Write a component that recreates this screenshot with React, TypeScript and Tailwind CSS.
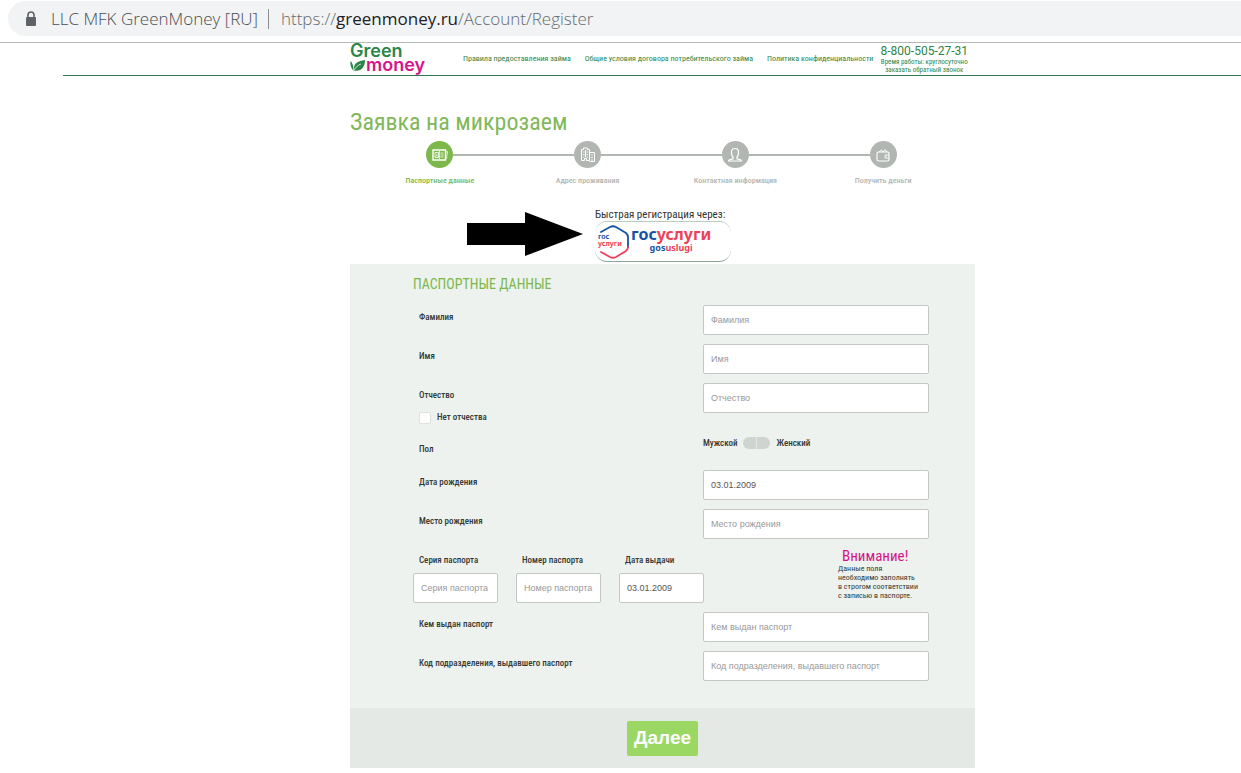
import { useState } from "react";
import type { ReactNode } from "react";

const navLinks = ["Правила предоставления займа", "Общие условия договора потребительского займа", "Политика конфиденциальности"];

const PassportIcon = () => (
    <svg viewBox="0 0 18 16" className="w-[18px] h-4" fill="none" stroke="currentColor">
        <path d="M2 3h12.500v10H2z" strokeWidth="1.400" />
        <path d="M14.500 5l2-.5-1 7-1 .5M4 5.500h3.500v5H4zM9.500 6h3M9.500 8h3M9.500 10h3M8.400 4v8" strokeWidth=".8" />
        <path d="M4.800 9.500c0-1.300 2-1.300 2 0M5.800 6.500v1" strokeWidth=".9" />
    </svg>
);

const BuildingIcon = () => (
    <svg viewBox="0 0 18 16" className="w-[18px] h-4" fill="none" stroke="currentColor">
        <path d="M2.500 13.500V2.500h2V1h4v1.500h2v11h-3v-2h-2v2z" />
        <path d="M10.500 5.500h5v9h-5" />
        <path d="M4 5h1.500M7.500 5H9M4 7.500h1.500M7.500 7.500H9M4 10h1.500M7.500 10H9M12 8h2M12 10.500h2M12 13h2M6.500 3v7" strokeWidth=".9" />
    </svg>
);

const PersonIcon = () => (
    <svg viewBox="0 0 18 16" className="w-[18px] h-4" fill="none" stroke="currentColor">
        <path d="M2.500 14c0-1.500 1.500-1.500 4.500-2v-2C5.500 9 5.500 7 5.500 5 5.500 3 7 1.500 9 1.500S12.500 3 12.500 5c0 2 0 4-1.500 5v2c3 .5 4.500.5 4.500 2z" strokeWidth="1.200" />
    </svg>
);

const WalletIcon = () => (
    <svg viewBox="0 0 18 16" className="w-[18px] h-4" fill="none" stroke="currentColor">
        <rect x="3" y="5" width="12" height="9" rx="1.500" strokeWidth="1.100" />
        <path d="M5 5l2.500-2 1.500 2 2-2.500L13 5M15 8h-4v3h4M12.500 9.500h.5" strokeWidth=".9" />
    </svg>
);

const steps = [
    { name: "Паспортные данные", icon: <PassportIcon />, active: true },
    { name: "Адрес проживания", icon: <BuildingIcon />, active: false },
    { name: "Контактная информация", icon: <PersonIcon />, active: false },
    { name: "Получить деньги", icon: <WalletIcon />, active: false },
];

const labelClass = "pl-[6px] text-[9px] leading-[25px] font-medium text-[#343a36]";
const inputClass =
    "h-[30px] px-[7px] bg-white border border-[#c3c8c4] rounded-xs font-['Liberation_Sans',sans-serif] text-[9px] text-[#555] placeholder:text-[#999]";

function Logo() {
    return (
        <a href="/" className="block w-[80px] pb-[3px] font-[Inter,sans-serif] text-[18px] leading-[14px] font-semibold">
            <span className="block text-[#2b8547]">Green</span>
            <span className="flex items-center text-[#d5148b]">
                <svg viewBox="0 0 16 14" className="w-4 h-[14px] shrink-0">
                    <path d="M4 12.500C3 6 7 3 15 2c0 7-4 12-11 10.500z" fill="#2b8547" />
                    <path d="M3.500 13C1 10 0 7 .5 3c2 1.500 3 5 3 10z" fill="#2b8547" />
                    <path d="M4 12c2-3 4-5 7-6" stroke="#fff" strokeWidth=".8" fill="none" />
                </svg>
                money
            </span>
        </a>
    );
}

function AddressBar() {
    return (
        <div className="pt-px pb-[6px] border-b border-[#b5b8b6]">
            <div className="ml-2 h-[35px] flex items-center rounded-l-full bg-[#f1f3f4] font-['Open_Sans',sans-serif] font-light text-[17px] text-[#4a4e52] whitespace-nowrap">
                <svg viewBox="0 0 12 16" className="ml-[17px] w-3 h-4">
                    <path d="M3 6V4a3 3 0 0 1 6 0v2" fill="none" stroke="#5f6368" strokeWidth="1.600" />
                    <rect x="1" y="6" width="10" height="9" rx="1" fill="#5f6368" />
                </svg>
                <span className="ml-[14px]">LLC MFK GreenMoney [RU]</span>
                <span className="ml-[10px] mr-3 w-px h-5 bg-[#8a8d90]" />
                <span className="text-[#666b70]">
                    https://<span className="font-normal text-[#202124]">greenmoney.ru</span>/Account/Register
                </span>
            </div>
        </div>
    );
}

function Field({ id, label, value, children }: { id: string; label: string; value?: string; children?: ReactNode }) {
    return (
        <div className="flex items-start justify-between">
            <div>
                <label htmlFor={id} className={`block ${labelClass}`}>{label}</label>
                {children}
            </div>
            <input id={id} type="text" placeholder={label} defaultValue={value} className={`w-[226px] ${inputClass}`} />
        </div>
    );
}

function SmallField({ id, label, value }: { id: string; label: string; value?: string }) {
    return (
        <div className="w-[85px]">
            <label htmlFor={id} className={`block ${labelClass}`}>{label}</label>
            <input id={id} type="text" placeholder={label} defaultValue={value} className={`w-full ${inputClass}`} />
        </div>
    );
}

export default function App() {
    const [female, setFemale] = useState(false);

    return (
        <div className="min-h-screen bg-white font-['Roboto_Condensed',Roboto,sans-serif]">
            <AddressBar />

            <div className="ml-[63px]">
                <header className="pl-[21px] border-b border-[#2f7d4c]">
                    <div className="mx-auto max-w-[625px] h-8 flex items-center text-[#2b8547] whitespace-nowrap">
                        <Logo />
                        <nav className="ml-[33px] flex gap-[14px] text-[8px]">
                            {navLinks.map((link) => (
                                <a key={link} href="#">{link}</a>
                            ))}
                        </nav>
                        <div className="ml-auto mr-[7px] text-center text-[7px] leading-2">
                            <a href="tel:88005052731" className="block text-[12px] leading-[14px] font-[Roboto,sans-serif]">8-800-505-27-31</a>
                            <p>Время работы: круглосуточно</p>
                            <a href="#" className="block">заказать обратный звонок</a>
                        </div>
                    </div>
                </header>

                <main className="pl-[21px]">
                    <div className="mx-auto max-w-[625px]">
                        <h1 className="pt-[30px] text-[24px] leading-8 text-[#82b85a]">Заявка на микрозаем</h1>

                        <ol className="mt-[3px] pl-4 pr-[18px] grid grid-cols-4">
                            {steps.map((step, i) => (
                                <li key={step.name} className={step.active ? "text-[#7cb84b]" : "text-[#b2b6b2]"}>
                                    <div className="flex items-center">
                                        <span className={`h-[2px] flex-1 ${i > 0 ? "bg-[#b2b6b2]" : ""}`} />
                                        <span className={`size-[27px] rounded-full grid place-items-center ${step.active ? "bg-[#7cb84b]" : "bg-[#b2b6b2]"}`}>
                                            <span className="text-white">{step.icon}</span>
                                        </span>
                                        <span className={`h-[2px] flex-1 ${i < steps.length - 1 ? "bg-[#b2b6b2]" : ""}`} />
                                    </div>
                                    <p className="mt-[5px] text-center text-[8px] leading-4 font-medium">{step.name}</p>
                                </li>
                            ))}
                        </ol>

                        <div className="mt-5 pl-[117px] pb-[2px] flex items-start gap-3">
                            <svg viewBox="0 0 116 44" className="mt-[3px] w-[116px] h-11">
                                <path d="M0 11h58V0l58 22-58 22V33H0z" fill="#000" />
                            </svg>
                            <div className="w-[136px]">
                                <p className="text-[11px] leading-3 text-[#333] whitespace-nowrap">Быстрая регистрация через:</p>
                                <button type="button" className="w-full h-[41px] pl-[2px] flex items-center rounded-xl border-y border-t-[#b9cbbd] border-b-[#8fa596] bg-white font-['Noto_Sans',sans-serif] font-bold text-[#ee3f58]">
                                    <svg viewBox="0 0 34 34" className="w-[34px] h-[34px] shrink-0" fill="none" strokeWidth="1.800" strokeLinecap="round" strokeLinejoin="round">
                                        <path d="M4 7l9-5c2-1 4-1 6 0l10 6c1 1 2 2 2 4v10" stroke="#1653a6" />
                                        <path d="M31 22c0 2-1 3-2 4l-10 6c-2 1-4 1-6 0l-9-5" stroke="#ee3f58" />
                                        <text x="1" y="14" fontSize="7" fill="#1653a6" stroke="none">гос</text>
                                        <text x="1" y="21" fontSize="7" fill="#ee3f58" stroke="none">услуги</text>
                                    </svg>
                                    <span className="pb-[5px] text-center">
                                        <span className="block text-[16px] leading-4"><span className="text-[#1653a6]">гос</span>услуги</span>
                                        <span className="block text-[9px] leading-[11px]"><span className="text-[#1653a6]">gos</span>uslugi</span>
                                    </span>
                                </button>
                            </div>
                        </div>

                        <form className="bg-[#edf2ee]" onSubmit={(e) => e.preventDefault()}>
                            <div className="pt-2 pb-[27px] pl-[63px] pr-[46px] flex flex-col gap-[9px]">
                                <h2 className="text-[14px] leading-6 text-[#7cb84b]">ПАСПОРТНЫЕ ДАННЫЕ</h2>
                                <Field id="surname" label="Фамилия" />
                                <Field id="name" label="Имя" />
                                <Field id="patronymic" label="Отчество">
                                    <label className="h-5 pl-[6px] flex items-center gap-[6px] text-[9px] font-medium text-[#343a36]">
                                        <input type="checkbox" className="appearance-none size-3 rounded-xs border border-[#dde1de] bg-white checked:bg-[#7cb84b]" />
                                        Нет отчества
                                    </label>
                                </Field>

                                <div className="h-6 flex items-start justify-between">
                                    <span id="gender" className={labelClass}>Пол</span>
                                    <div className="w-[226px] flex items-center gap-[6px] text-[9px] leading-3 font-medium text-[#343a36]">
                                        <span>Мужской</span>
                                        <button
                                            type="button"
                                            role="switch"
                                            aria-checked={female}
                                            aria-labelledby="gender"
                                            onClick={() => setFemale(!female)}
                                            className="w-[27px] h-3 flex justify-center rounded-full bg-[#cfd4d0]"
                                        >
                                            <span className="w-px h-full bg-[#e4e8e5]" />
                                        </button>
                                        <span>Женский</span>
                                    </div>
                                </div>

                                <Field id="birthday" label="Дата рождения" value="03.01.2009" />
                                <Field id="birthplace" label="Место рождения" />

                                <div className="flex items-start gap-[18px] whitespace-nowrap">
                                    <SmallField id="series" label="Серия паспорта" />
                                    <SmallField id="number" label="Номер паспорта" />
                                    <SmallField id="issued" label="Дата выдачи" value="03.01.2009" />
                                    <div className="ml-auto w-[91px]">
                                        <h3 className="pl-1 text-[15px] leading-4 text-[#d5148b]">Внимание!</h3>
                                        <p className="text-[8px] leading-[9px] text-[#343a36]">
                                            Данные поля<br />необходимо заполнять<br />в строгом соответствии<br />с записью в паспорте.
                                        </p>
                                    </div>
                                </div>

                                <Field id="issuer" label="Кем выдан паспорт" />
                                <Field id="code" label="Код подразделения, выдавшего паспорт" />
                            </div>

                            <div className="h-[60px] flex items-center justify-center bg-[#e5e9e5]">
                                <button type="submit" className="w-[71px] h-[35px] rounded-xs bg-[#9bd763] font-['Liberation_Sans',sans-serif] text-[19px] font-bold text-white">
                                    Далее
                                </button>
                            </div>
                        </form>
                    </div>
                </main>
            </div>
        </div>
    );
}
